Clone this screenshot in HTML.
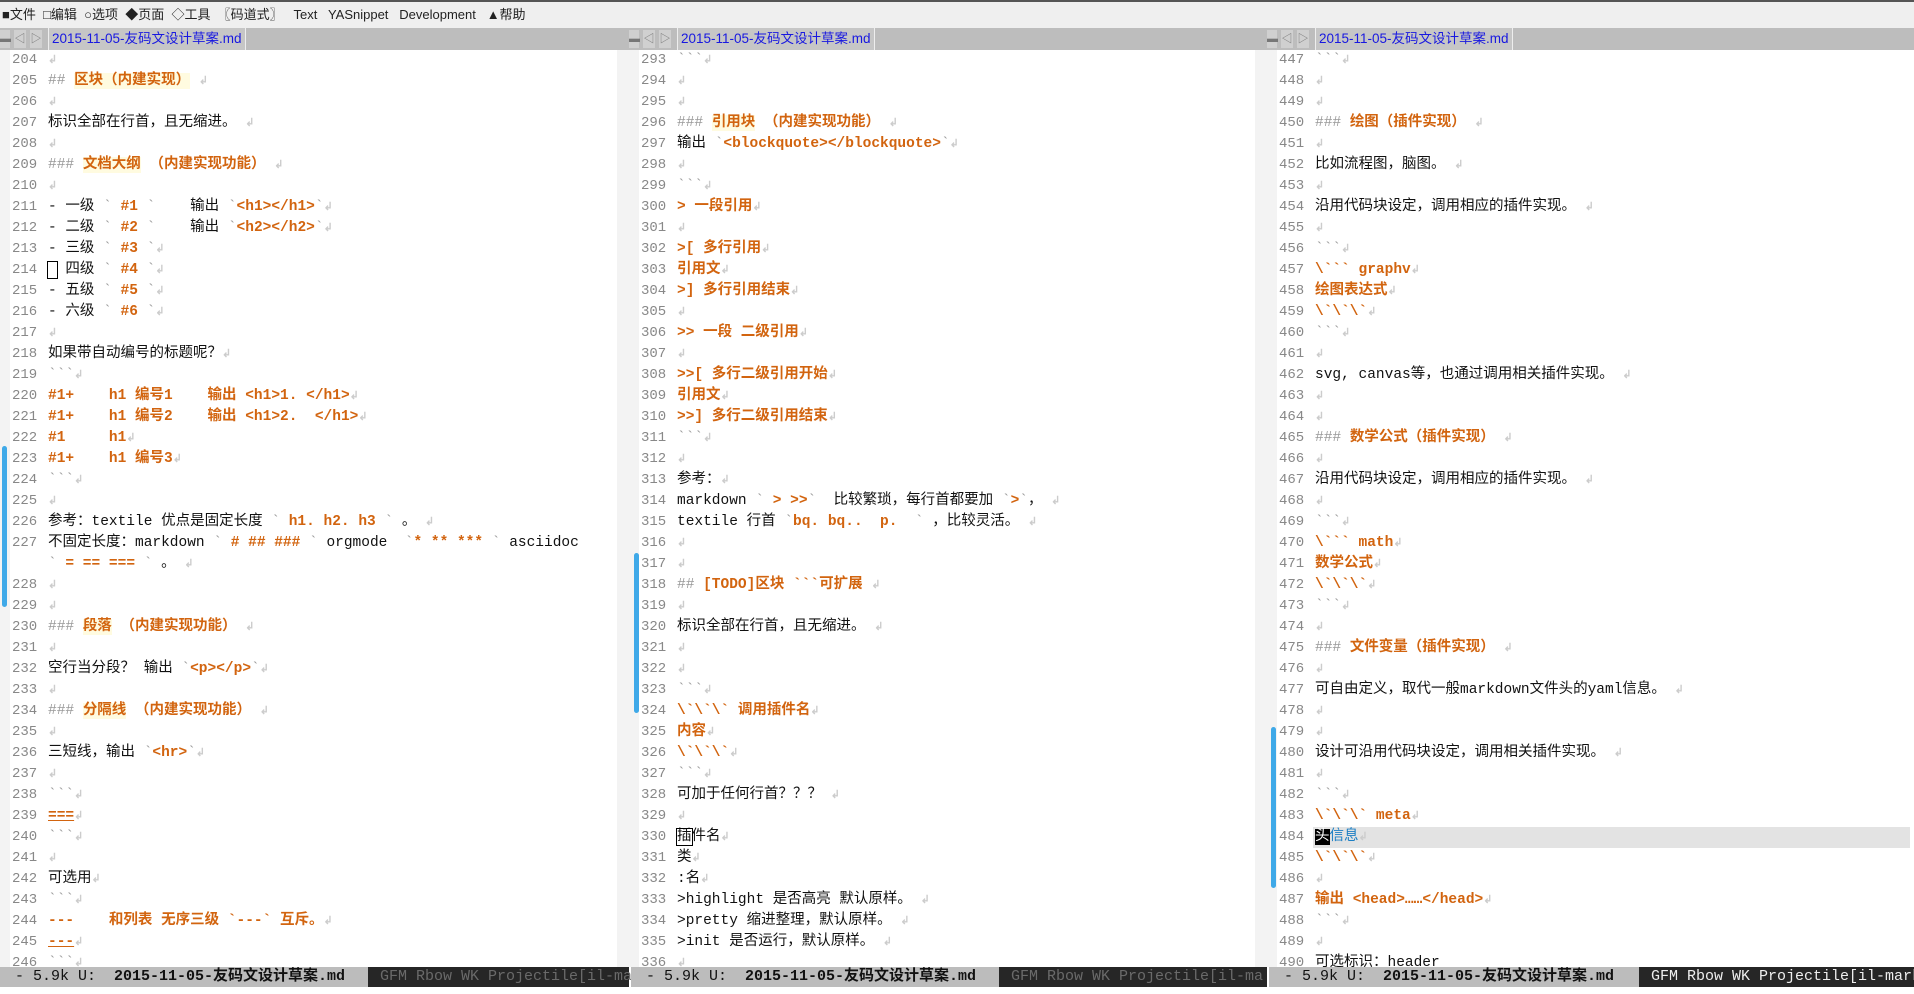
<!DOCTYPE html>
<html><head><meta charset="utf-8">
<style>
*{margin:0;padding:0;box-sizing:border-box}
body{width:1914px;height:994px;overflow:hidden;background:#fff;position:relative;font-family:"Liberation Mono","Noto Sans CJK SC",monospace;font-size:14.5px;color:#111}
#menu{position:absolute;left:0;top:0;width:1914px;height:28px;background:#efefef;border-top:2px solid #555;font-family:"Liberation Sans","Noto Sans CJK SC",sans-serif;font-size:13px;line-height:26px;white-space:pre;color:#222;padding-left:2px}
.pane{position:absolute;top:28px;height:939px;overflow:hidden;background:#fff}
.tab{position:absolute;left:0;top:0;right:0;height:22px;background:#bdbdbd;font-family:"Liberation Sans","Noto Sans CJK SC",sans-serif;font-size:13.5px;line-height:22px}
.tab .b{position:absolute;top:2px;width:12px;height:18px;background:#d0d0d0;color:#777;font-size:11px;text-align:center;line-height:18px}
.tab .t{position:absolute;left:48px;top:0;height:22px;padding:0 3px;background:#c6c6c6;color:#1818e0;border-left:1px solid #eee;border-right:1px solid #eee}
.body{position:absolute;top:22px;left:0;right:0;bottom:0}
.fr{position:absolute;top:0;bottom:0;left:0;width:10px;background:#f3f3f3}
.sc{position:absolute;top:0;bottom:0;right:0;width:12px;background:#f3f3f3}
.r{position:absolute;left:0;right:12px;height:21px;line-height:21px;white-space:pre}
.r i{font-style:normal;position:absolute;left:12px;width:28px;color:#888;font-size:14px}
.r span.c{position:absolute;left:48px}
.o{color:#d2640f;font-weight:bold}
.y{background:#fffbe0}
.g{color:#999}
.m{color:#ccc;font-size:11px}
.bl{position:absolute;width:5px;background:#3fa9e8;border-radius:3px}
.st{position:absolute;top:967px;height:20px;line-height:20px;white-space:pre;font-size:15px}
.st .a{position:absolute;left:0;top:0;height:20px;background:#bcbcbc;color:#111;padding-left:6px}
.st .d{position:absolute;top:0;height:20px;background:#262626;right:0}
</style></head><body>
<div id="menu">■文件  □编辑  ○选项  ◆页面  ◇工具  〖码道式〗   Text   YASnippet   Development   ▲帮助</div>

<div class="pane" style="left:0;width:629px">
<div class="tab"><div class="b" style="left:0;width:10px">▬</div><div class="b" style="left:14px">◁</div><div class="b" style="left:30px">▷</div><div class="t">2015-11-05-友码文设计草案.md</div></div>
<div class="body"><div class="fr"></div><div class="sc"></div>
<div class="r" style="top:0"><i>204</i><span class="c"><b class="m">↲</b></span></div>
<div class="r" style="top:21px"><i>205</i><span class="c"><span class="g">##</span> <span class="o y">区块（内建实现）</span> <b class="m">↲</b></span></div>
<div class="r" style="top:42px"><i>206</i><span class="c"><b class="m">↲</b></span></div>
<div class="r" style="top:63px"><i>207</i><span class="c">标识全部在行首，且无缩进。 <b class="m">↲</b></span></div>
<div class="r" style="top:84px"><i>208</i><span class="c"><b class="m">↲</b></span></div>
<div class="r" style="top:105px"><i>209</i><span class="c"><span class="g">###</span> <span class="o y">文档大纲</span> <span class="o">（内建实现功能）</span> <b class="m">↲</b></span></div>
<div class="r" style="top:126px"><i>210</i><span class="c"><b class="m">↲</b></span></div>
<div class="r" style="top:147px"><i>211</i><span class="c">- 一级 <span class="g">&#96;</span> <span class="o">#1</span> <span class="g">&#96;</span>    输出 <span class="g">&#96;</span><span class="o">&lt;h1&gt;&lt;/h1&gt;</span><span class="g">&#96;</span><b class="m">↲</b></span></div>
<div class="r" style="top:168px"><i>212</i><span class="c">- 二级 <span class="g">&#96;</span> <span class="o">#2</span> <span class="g">&#96;</span>    输出 <span class="g">&#96;</span><span class="o">&lt;h2&gt;&lt;/h2&gt;</span><span class="g">&#96;</span><b class="m">↲</b></span></div>
<div class="r" style="top:189px"><i>213</i><span class="c">- 三级 <span class="g">&#96;</span> <span class="o">#3</span> <span class="g">&#96;</span><b class="m">↲</b></span></div>
<div class="r" style="top:210px"><i>214</i><span class="c"><span style="outline:1px solid #000">&nbsp;</span> 四级 <span class="g">&#96;</span> <span class="o">#4</span> <span class="g">&#96;</span><b class="m">↲</b></span></div>
<div class="r" style="top:231px"><i>215</i><span class="c">- 五级 <span class="g">&#96;</span> <span class="o">#5</span> <span class="g">&#96;</span><b class="m">↲</b></span></div>
<div class="r" style="top:252px"><i>216</i><span class="c">- 六级 <span class="g">&#96;</span> <span class="o">#6</span> <span class="g">&#96;</span><b class="m">↲</b></span></div>
<div class="r" style="top:273px"><i>217</i><span class="c"><b class="m">↲</b></span></div>
<div class="r" style="top:294px"><i>218</i><span class="c">如果带自动编号的标题呢？<b class="m">↲</b></span></div>
<div class="r" style="top:315px"><i>219</i><span class="c"><span class="g">&#96;&#96;&#96;</span><b class="m">↲</b></span></div>
<div class="r" style="top:336px"><i>220</i><span class="c"><span class="o">#1+    h1 编号1    输出 &lt;h1&gt;1. &lt;/h1&gt;</span><b class="m">↲</b></span></div>
<div class="r" style="top:357px"><i>221</i><span class="c"><span class="o">#1+    h1 编号2    输出 &lt;h1&gt;2.  &lt;/h1&gt;</span><b class="m">↲</b></span></div>
<div class="r" style="top:378px"><i>222</i><span class="c"><span class="o">#1     h1</span><b class="m">↲</b></span></div>
<div class="r" style="top:399px"><i>223</i><span class="c"><span class="o">#1+    h1 编号3</span><b class="m">↲</b></span></div>
<div class="r" style="top:420px"><i>224</i><span class="c"><span class="g">&#96;&#96;&#96;</span><b class="m">↲</b></span></div>
<div class="r" style="top:441px"><i>225</i><span class="c"><b class="m">↲</b></span></div>
<div class="r" style="top:462px"><i>226</i><span class="c">参考：textile 优点是固定长度 <span class="g">&#96;</span> <span class="o">h1. h2. h3</span> <span class="g">&#96;</span> 。 <b class="m">↲</b></span></div>
<div class="r" style="top:483px"><i>227</i><span class="c">不固定长度：markdown <span class="g">&#96;</span> <span class="o"># ## ###</span> <span class="g">&#96;</span> orgmode  <span class="g">&#96;</span><span class="o">* ** ***</span> <span class="g">&#96;</span> asciidoc</span></div>
<div class="r" style="top:504px"><span class="c"><span class="g">&#96;</span> <span class="o">= == ===</span> <span class="g">&#96;</span> 。 <b class="m">↲</b></span></div>
<div class="r" style="top:525px"><i>228</i><span class="c"><b class="m">↲</b></span></div>
<div class="r" style="top:546px"><i>229</i><span class="c"><b class="m">↲</b></span></div>
<div class="r" style="top:567px"><i>230</i><span class="c"><span class="g">###</span> <span class="o y">段落</span> <span class="o">（内建实现功能）</span> <b class="m">↲</b></span></div>
<div class="r" style="top:588px"><i>231</i><span class="c"><b class="m">↲</b></span></div>
<div class="r" style="top:609px"><i>232</i><span class="c">空行当分段？ 输出 <span class="g">&#96;</span><span class="o">&lt;p&gt;&lt;/p&gt;</span><span class="g">&#96;</span><b class="m">↲</b></span></div>
<div class="r" style="top:630px"><i>233</i><span class="c"><b class="m">↲</b></span></div>
<div class="r" style="top:651px"><i>234</i><span class="c"><span class="g">###</span> <span class="o y">分隔线</span> <span class="o">（内建实现功能）</span> <b class="m">↲</b></span></div>
<div class="r" style="top:672px"><i>235</i><span class="c"><b class="m">↲</b></span></div>
<div class="r" style="top:693px"><i>236</i><span class="c">三短线，输出 <span class="g">&#96;</span><span class="o">&lt;hr&gt;</span><span class="g">&#96;</span><b class="m">↲</b></span></div>
<div class="r" style="top:714px"><i>237</i><span class="c"><b class="m">↲</b></span></div>
<div class="r" style="top:735px"><i>238</i><span class="c"><span class="g">&#96;&#96;&#96;</span><b class="m">↲</b></span></div>
<div class="r" style="top:756px"><i>239</i><span class="c"><span class="o" style="text-decoration:underline">===</span><b class="m">↲</b></span></div>
<div class="r" style="top:777px"><i>240</i><span class="c"><span class="g">&#96;&#96;&#96;</span><b class="m">↲</b></span></div>
<div class="r" style="top:798px"><i>241</i><span class="c"><b class="m">↲</b></span></div>
<div class="r" style="top:819px"><i>242</i><span class="c">可选用<b class="m">↲</b></span></div>
<div class="r" style="top:840px"><i>243</i><span class="c"><span class="g">&#96;&#96;&#96;</span><b class="m">↲</b></span></div>
<div class="r" style="top:861px"><i>244</i><span class="c"><span class="o">---    和列表 无序三级 &#96;---&#96; 互斥。</span><b class="m">↲</b></span></div>
<div class="r" style="top:882px"><i>245</i><span class="c"><span class="o" style="text-decoration:underline">---</span><b class="m">↲</b></span></div>
<div class="r" style="top:903px"><i>246</i><span class="c"><span class="g">&#96;&#96;&#96;</span><b class="m">↲</b></span></div>
<div class="bl" style="left:2px;top:396px;height:161px"></div>
</div></div>

<div class="pane" style="left:629px;width:638px">
<div class="tab"><div class="b" style="left:0;width:10px">▬</div><div class="b" style="left:14px">◁</div><div class="b" style="left:30px">▷</div><div class="t">2015-11-05-友码文设计草案.md</div></div>
<div class="body"><div class="fr"></div><div class="sc"></div>
<div class="r" style="top:0"><i>293</i><span class="c"><span class="g">&#96;&#96;&#96;</span><b class="m">↲</b></span></div>
<div class="r" style="top:21px"><i>294</i><span class="c"><b class="m">↲</b></span></div>
<div class="r" style="top:42px"><i>295</i><span class="c"><b class="m">↲</b></span></div>
<div class="r" style="top:63px"><i>296</i><span class="c"><span class="g">###</span> <span class="o y">引用块</span> <span class="o">（内建实现功能）</span> <b class="m">↲</b></span></div>
<div class="r" style="top:84px"><i>297</i><span class="c">输出 <span class="g">&#96;</span><span class="o">&lt;blockquote&gt;&lt;/blockquote&gt;</span><span class="g">&#96;</span><b class="m">↲</b></span></div>
<div class="r" style="top:105px"><i>298</i><span class="c"><b class="m">↲</b></span></div>
<div class="r" style="top:126px"><i>299</i><span class="c"><span class="g">&#96;&#96;&#96;</span><b class="m">↲</b></span></div>
<div class="r" style="top:147px"><i>300</i><span class="c"><span class="o">&gt; 一段引用</span><b class="m">↲</b></span></div>
<div class="r" style="top:168px"><i>301</i><span class="c"><b class="m">↲</b></span></div>
<div class="r" style="top:189px"><i>302</i><span class="c"><span class="o">&gt;[ 多行引用</span><b class="m">↲</b></span></div>
<div class="r" style="top:210px"><i>303</i><span class="c"><span class="o">引用文</span><b class="m">↲</b></span></div>
<div class="r" style="top:231px"><i>304</i><span class="c"><span class="o">&gt;] 多行引用结束</span><b class="m">↲</b></span></div>
<div class="r" style="top:252px"><i>305</i><span class="c"><b class="m">↲</b></span></div>
<div class="r" style="top:273px"><i>306</i><span class="c"><span class="o">&gt;&gt; 一段 二级引用</span><b class="m">↲</b></span></div>
<div class="r" style="top:294px"><i>307</i><span class="c"><b class="m">↲</b></span></div>
<div class="r" style="top:315px"><i>308</i><span class="c"><span class="o">&gt;&gt;[ 多行二级引用开始</span><b class="m">↲</b></span></div>
<div class="r" style="top:336px"><i>309</i><span class="c"><span class="o">引用文</span><b class="m">↲</b></span></div>
<div class="r" style="top:357px"><i>310</i><span class="c"><span class="o">&gt;&gt;] 多行二级引用结束</span><b class="m">↲</b></span></div>
<div class="r" style="top:378px"><i>311</i><span class="c"><span class="g">&#96;&#96;&#96;</span><b class="m">↲</b></span></div>
<div class="r" style="top:399px"><i>312</i><span class="c"><b class="m">↲</b></span></div>
<div class="r" style="top:420px"><i>313</i><span class="c">参考：<b class="m">↲</b></span></div>
<div class="r" style="top:441px"><i>314</i><span class="c">markdown <span class="g">&#96;</span> <span class="o">&gt; &gt;&gt;</span><span class="g">&#96;</span>  比较繁琐，每行首都要加 <span class="g">&#96;</span><span class="o">&gt;</span><span class="g">&#96;</span>， <b class="m">↲</b></span></div>
<div class="r" style="top:462px"><i>315</i><span class="c">textile 行首 <span class="g">&#96;</span><span class="o">bq. bq..  p.</span>  <span class="g">&#96;</span> ，比较灵活。 <b class="m">↲</b></span></div>
<div class="r" style="top:483px"><i>316</i><span class="c"><b class="m">↲</b></span></div>
<div class="r" style="top:504px"><i>317</i><span class="c"><b class="m">↲</b></span></div>
<div class="r" style="top:525px"><i>318</i><span class="c"><span class="g">##</span> <span class="o">[TODO]区块 &#96;&#96;&#96;可扩展</span> <b class="m">↲</b></span></div>
<div class="r" style="top:546px"><i>319</i><span class="c"><b class="m">↲</b></span></div>
<div class="r" style="top:567px"><i>320</i><span class="c">标识全部在行首，且无缩进。 <b class="m">↲</b></span></div>
<div class="r" style="top:588px"><i>321</i><span class="c"><b class="m">↲</b></span></div>
<div class="r" style="top:609px"><i>322</i><span class="c"><b class="m">↲</b></span></div>
<div class="r" style="top:630px"><i>323</i><span class="c"><span class="g">&#96;&#96;&#96;</span><b class="m">↲</b></span></div>
<div class="r" style="top:651px"><i>324</i><span class="c"><span class="o">\&#96;\&#96;\&#96; 调用插件名</span><b class="m">↲</b></span></div>
<div class="r" style="top:672px"><i>325</i><span class="c"><span class="o">内容</span><b class="m">↲</b></span></div>
<div class="r" style="top:693px"><i>326</i><span class="c"><span class="o">\&#96;\&#96;\&#96;</span><b class="m">↲</b></span></div>
<div class="r" style="top:714px"><i>327</i><span class="c"><span class="g">&#96;&#96;&#96;</span><b class="m">↲</b></span></div>
<div class="r" style="top:735px"><i>328</i><span class="c">可加于任何行首？？？ <b class="m">↲</b></span></div>
<div class="r" style="top:756px"><i>329</i><span class="c"><b class="m">↲</b></span></div>
<div class="r" style="top:777px"><i>330</i><span class="c"><span style="outline:1px solid #000">插</span>件名<b class="m">↲</b></span></div>
<div class="r" style="top:798px"><i>331</i><span class="c">类<b class="m">↲</b></span></div>
<div class="r" style="top:819px"><i>332</i><span class="c">:名<b class="m">↲</b></span></div>
<div class="r" style="top:840px"><i>333</i><span class="c">&gt;highlight 是否高亮 默认原样。 <b class="m">↲</b></span></div>
<div class="r" style="top:861px"><i>334</i><span class="c">&gt;pretty 缩进整理，默认原样。 <b class="m">↲</b></span></div>
<div class="r" style="top:882px"><i>335</i><span class="c">&gt;init 是否运行，默认原样。 <b class="m">↲</b></span></div>
<div class="r" style="top:903px"><i>336</i><span class="c"><b class="m">↲</b></span></div>
<div class="bl" style="left:5px;top:503px;height:160px"></div>
</div></div>

<div class="pane" style="left:1267px;width:647px">
<div class="tab"><div class="b" style="left:0;width:10px">▬</div><div class="b" style="left:14px">◁</div><div class="b" style="left:30px">▷</div><div class="t">2015-11-05-友码文设计草案.md</div></div>
<div class="body"><div class="fr"></div>
<div class="r" style="top:0"><i>447</i><span class="c"><span class="g">&#96;&#96;&#96;</span><b class="m">↲</b></span></div>
<div class="r" style="top:21px"><i>448</i><span class="c"><b class="m">↲</b></span></div>
<div class="r" style="top:42px"><i>449</i><span class="c"><b class="m">↲</b></span></div>
<div class="r" style="top:63px"><i>450</i><span class="c"><span class="g">###</span> <span class="o">绘图（插件实现）</span> <b class="m">↲</b></span></div>
<div class="r" style="top:84px"><i>451</i><span class="c"><b class="m">↲</b></span></div>
<div class="r" style="top:105px"><i>452</i><span class="c">比如流程图，脑图。 <b class="m">↲</b></span></div>
<div class="r" style="top:126px"><i>453</i><span class="c"><b class="m">↲</b></span></div>
<div class="r" style="top:147px"><i>454</i><span class="c">沿用代码块设定，调用相应的插件实现。 <b class="m">↲</b></span></div>
<div class="r" style="top:168px"><i>455</i><span class="c"><b class="m">↲</b></span></div>
<div class="r" style="top:189px"><i>456</i><span class="c"><span class="g">&#96;&#96;&#96;</span><b class="m">↲</b></span></div>
<div class="r" style="top:210px"><i>457</i><span class="c"><span class="o">\&#96;&#96;&#96;</span> <span class="o">graphv</span><b class="m">↲</b></span></div>
<div class="r" style="top:231px"><i>458</i><span class="c"><span class="o">绘图表达式</span><b class="m">↲</b></span></div>
<div class="r" style="top:252px"><i>459</i><span class="c"><span class="o">\&#96;\&#96;\&#96;</span><b class="m">↲</b></span></div>
<div class="r" style="top:273px"><i>460</i><span class="c"><span class="g">&#96;&#96;&#96;</span><b class="m">↲</b></span></div>
<div class="r" style="top:294px"><i>461</i><span class="c"><b class="m">↲</b></span></div>
<div class="r" style="top:315px"><i>462</i><span class="c">svg, canvas等，也通过调用相关插件实现。 <b class="m">↲</b></span></div>
<div class="r" style="top:336px"><i>463</i><span class="c"><b class="m">↲</b></span></div>
<div class="r" style="top:357px"><i>464</i><span class="c"><b class="m">↲</b></span></div>
<div class="r" style="top:378px"><i>465</i><span class="c"><span class="g">###</span> <span class="o">数学公式（插件实现）</span> <b class="m">↲</b></span></div>
<div class="r" style="top:399px"><i>466</i><span class="c"><b class="m">↲</b></span></div>
<div class="r" style="top:420px"><i>467</i><span class="c">沿用代码块设定，调用相应的插件实现。 <b class="m">↲</b></span></div>
<div class="r" style="top:441px"><i>468</i><span class="c"><b class="m">↲</b></span></div>
<div class="r" style="top:462px"><i>469</i><span class="c"><span class="g">&#96;&#96;&#96;</span><b class="m">↲</b></span></div>
<div class="r" style="top:483px"><i>470</i><span class="c"><span class="o">\&#96;&#96;&#96;</span> <span class="o">math</span><b class="m">↲</b></span></div>
<div class="r" style="top:504px"><i>471</i><span class="c"><span class="o">数学公式</span><b class="m">↲</b></span></div>
<div class="r" style="top:525px"><i>472</i><span class="c"><span class="o">\&#96;\&#96;\&#96;</span><b class="m">↲</b></span></div>
<div class="r" style="top:546px"><i>473</i><span class="c"><span class="g">&#96;&#96;&#96;</span><b class="m">↲</b></span></div>
<div class="r" style="top:567px"><i>474</i><span class="c"><b class="m">↲</b></span></div>
<div class="r" style="top:588px"><i>475</i><span class="c"><span class="g">###</span> <span class="o">文件变量（插件实现）</span> <b class="m">↲</b></span></div>
<div class="r" style="top:609px"><i>476</i><span class="c"><b class="m">↲</b></span></div>
<div class="r" style="top:630px"><i>477</i><span class="c">可自由定义，取代一般markdown文件头的yaml信息。 <b class="m">↲</b></span></div>
<div class="r" style="top:651px"><i>478</i><span class="c"><b class="m">↲</b></span></div>
<div class="r" style="top:672px"><i>479</i><span class="c"><b class="m">↲</b></span></div>
<div class="r" style="top:693px"><i>480</i><span class="c">设计可沿用代码块设定，调用相关插件实现。 <b class="m">↲</b></span></div>
<div class="r" style="top:714px"><i>481</i><span class="c"><b class="m">↲</b></span></div>
<div class="r" style="top:735px"><i>482</i><span class="c"><span class="g">&#96;&#96;&#96;</span><b class="m">↲</b></span></div>
<div class="r" style="top:756px"><i>483</i><span class="c"><span class="o">\&#96;\&#96;\&#96;</span> <span class="o">meta</span><b class="m">↲</b></span></div>
<div class="r" style="top:777px;background:#e3e3e3;left:46px;right:4px"></div>
<div class="r" style="top:777px"><i>484</i><span class="c"><span style="background:#000;color:#fff">头</span><span style="color:#1c7fc4">信息</span><b class="m">↲</b></span></div>
<div class="r" style="top:798px"><i>485</i><span class="c"><span class="o">\&#96;\&#96;\&#96;</span><b class="m">↲</b></span></div>
<div class="r" style="top:819px"><i>486</i><span class="c"><b class="m">↲</b></span></div>
<div class="r" style="top:840px"><i>487</i><span class="c"><span class="o">输出</span> <span class="o">&lt;head&gt;……&lt;/head&gt;</span><b class="m">↲</b></span></div>
<div class="r" style="top:861px"><i>488</i><span class="c"><span class="g">&#96;&#96;&#96;</span><b class="m">↲</b></span></div>
<div class="r" style="top:882px"><i>489</i><span class="c"><b class="m">↲</b></span></div>
<div class="r" style="top:903px"><i>490</i><span class="c">可选标识：header</span></div>
<div class="bl" style="left:4px;top:677px;height:161px"></div>
</div></div>

<div class="st" style="left:0;width:629px"><div class="a" style="width:368px"> - 5.9k U:  <b>2015-11-05-友码文设计草案.md</b></div><div class="d" style="left:368px;color:#6a6a6a;padding-left:12px">GFM Rbow WK Projectile[il-ma</div></div>
<div class="st" style="left:631px;width:636px"><div class="a" style="width:368px"> - 5.9k U:  <b>2015-11-05-友码文设计草案.md</b></div><div class="d" style="left:368px;color:#6a6a6a;padding-left:12px">GFM Rbow WK Projectile[il-ma</div></div>
<div class="st" style="left:1269px;width:645px"><div class="a" style="width:370px"> - 5.9k U:  <b>2015-11-05-友码文设计草案.md</b></div><div class="d" style="left:370px;color:#eee;padding-left:12px">GFM Rbow WK Projectile[il-mark</div></div>
</body></html>
